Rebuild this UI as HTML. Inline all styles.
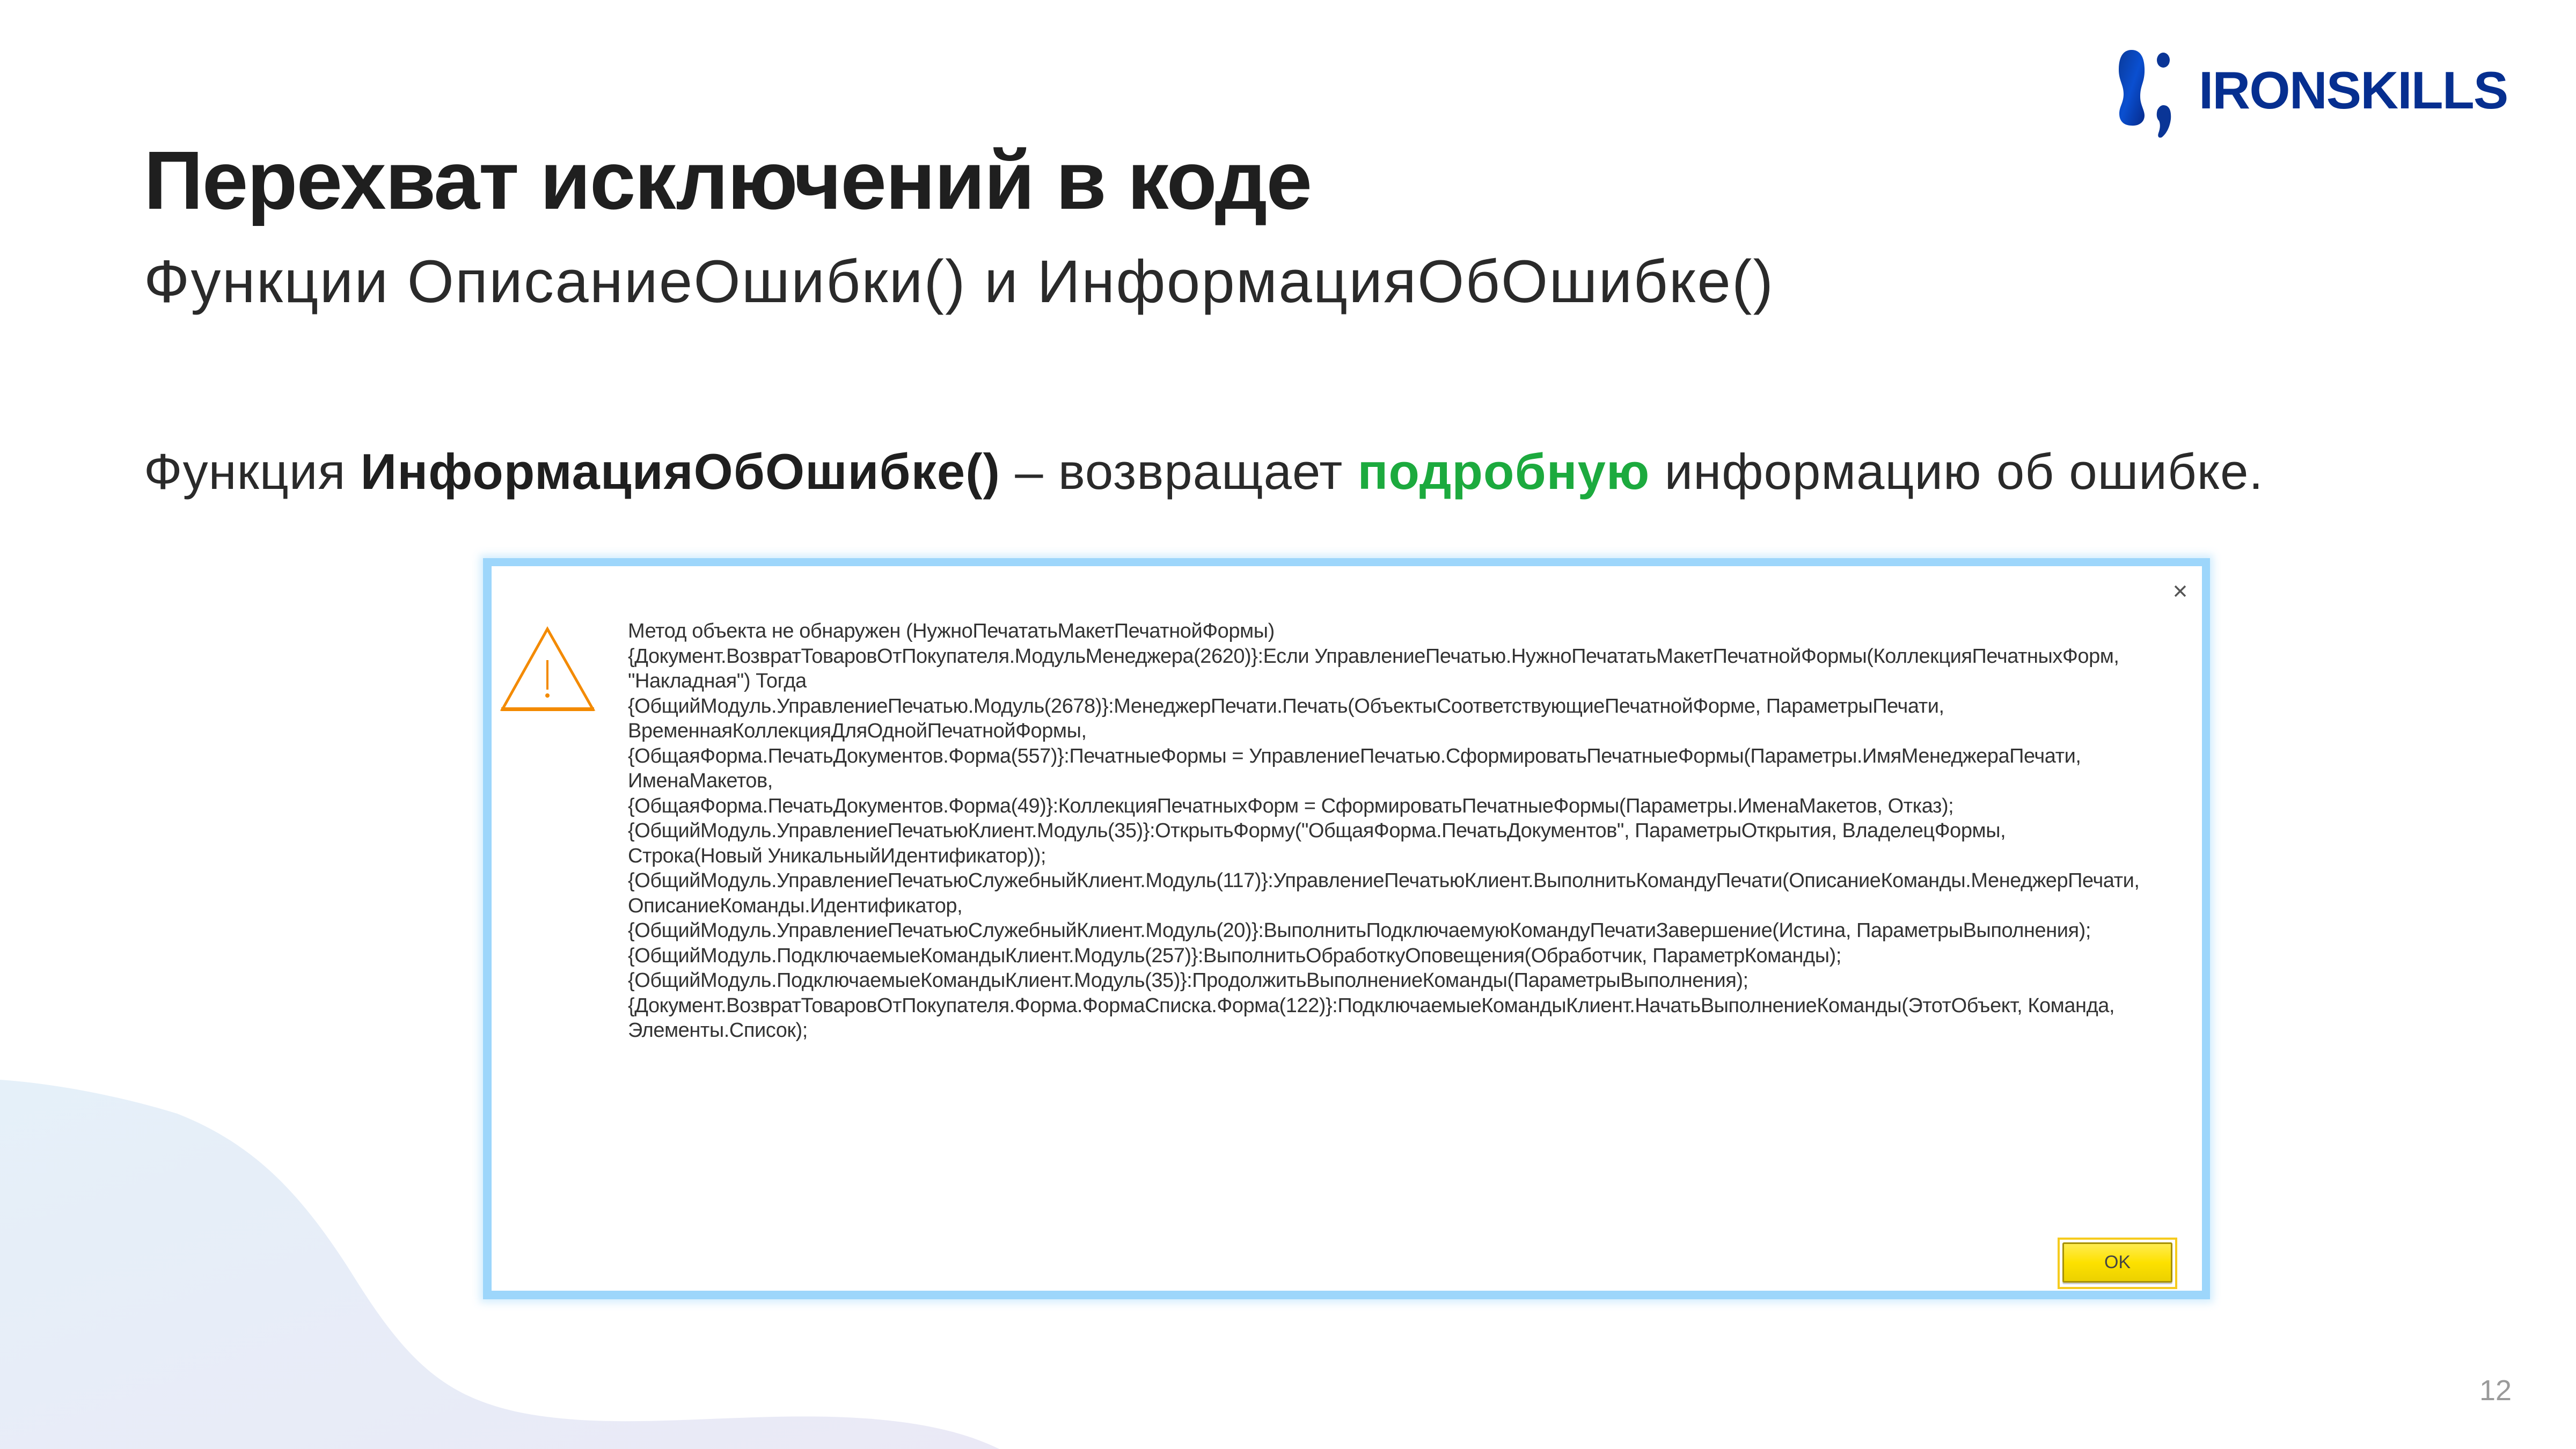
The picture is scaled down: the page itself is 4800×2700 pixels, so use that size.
<!DOCTYPE html>
<html><head><meta charset="utf-8">
<style>
*{margin:0;padding:0;box-sizing:border-box}
html,body{width:4800px;height:2700px;overflow:hidden;background:#fff}
body{position:relative;font-family:"Liberation Sans","DejaVu Sans",sans-serif;color:#222}
.abs{position:absolute}
#title{left:268px;top:248px;font-size:154px;font-weight:bold;letter-spacing:-2px;color:#1f1f1f;white-space:nowrap}
#sub{left:268px;top:460px;font-size:112px;color:#2a2a2a;white-space:nowrap;letter-spacing:2.3px}
#body{left:268px;top:825px;font-size:94px;color:#2a2a2a;white-space:nowrap;letter-spacing:1.1px}
#body b{color:#1f1f1f}
#body .g{color:#1caa3e;font-weight:bold}
#dlg{left:900px;top:1040px;width:3218px;height:1381px;background:#9dd6fb;box-shadow:0 0 14px 6px rgba(157,214,251,.45)}
#dlgin{left:916px;top:1055px;width:3187px;height:1350px;background:#fff}
#txt{left:1170px;top:1153px;font-size:38px;line-height:46.5px;color:#333;white-space:pre;letter-spacing:-0.45px}
#ok{left:3834px;top:2306px;width:223px;height:96px;border:4px solid #f6cb1e;background:#fff}
#okb{left:3843px;top:2315px;width:205px;height:75px;border:3px solid #a69000;border-radius:3px;background:linear-gradient(#ffec50,#fde100 50%,#ecd100);box-shadow:0 3px 0 #ccc;font-size:34px;color:#444;text-align:center;line-height:69px}
#logo{left:4097px;top:112px;font-size:98px;font-weight:bold;color:#062f90;letter-spacing:-1.8px;white-space:nowrap}
#pg{left:4620px;top:2560px;font-size:54px;color:#9a9a9a}
</style></head><body>
<svg class="abs" style="left:0;top:0" width="4800" height="2700">
<defs><linearGradient id="bg" x1="0" x2="1" y1="0" y2="1"><stop offset="0" stop-color="#e5f0f9"/><stop offset="1" stop-color="#eae9f6"/></linearGradient>
<linearGradient id="lg" x1="0" x2="1" y1="0" y2="1"><stop offset="0" stop-color="#0a3a9a"/><stop offset=".5" stop-color="#0a4fd0"/><stop offset="1" stop-color="#062a8a"/></linearGradient></defs>
<path d="M0 2012 C120 2020 250 2050 330 2075 C470 2130 560 2220 660 2380 C760 2540 830 2600 960 2630 C1100 2660 1250 2645 1440 2640 C1620 2636 1760 2650 1862 2700 L0 2700 Z" fill="url(#bg)"/>
<path d="M3972 93 C3990 93 3997 110 3996 135 C3995 155 3988 160 3988 180 C3988 195 3996 205 3996 215 C3996 228 3985 235 3972 234 C3958 234 3949 226 3949 212 C3949 198 3957 192 3957 175 C3957 158 3948 150 3948 130 C3948 108 3955 93 3972 93 Z" fill="url(#lg)"/>
<ellipse cx="4031" cy="112" rx="12" ry="14" fill="#0a3596"/>
<path d="M4031 196 C4044 196 4046 210 4045 222 C4043 238 4036 250 4028 256 C4022 258 4020 254 4022 248 C4025 240 4026 232 4023 225 C4018 220 4018 212 4020 205 C4023 199 4027 196 4031 196 Z" fill="#0a3596"/>
</svg>
<div id="logo" class="abs">IRONSKILLS</div>
<div id="title" class="abs">Перехват исключений в коде</div>
<div id="sub" class="abs">Функции ОписаниеОшибки() и ИнформацияОбОшибке()</div>
<div id="body" class="abs">Функция <b>ИнформацияОбОшибке()</b> – возвращает <span class="g">подробную</span> информацию об ошибке.</div>
<div id="dlg" class="abs"></div>
<div id="dlgin" class="abs"></div>
<svg class="abs" style="left:0;top:0" width="4800" height="2700">
<path d="M1020 1172 L936 1322 L1105 1322 Z" fill="none" stroke="#f38a00" stroke-width="5" stroke-linejoin="miter"/>
<rect x="934" y="1318" width="173" height="7" fill="#f38a00"/>
<rect x="1018" y="1230" width="4" height="55" fill="#f38a00"/>
<circle cx="1020" cy="1296" r="4" fill="#f38a00"/>
<path d="M4053 1092 L4072 1111 M4072 1092 L4053 1111" stroke="#555" stroke-width="3.5"/>
</svg>
<div id="txt" class="abs">Метод объекта не обнаружен (НужноПечататьМакетПечатнойФормы)
{Документ.ВозвратТоваровОтПокупателя.МодульМенеджера(2620)}:Если УправлениеПечатью.НужноПечататьМакетПечатнойФормы(КоллекцияПечатныхФорм,
"Накладная") Тогда
{ОбщийМодуль.УправлениеПечатью.Модуль(2678)}:МенеджерПечати.Печать(ОбъектыСоответствующиеПечатнойФорме, ПараметрыПечати,
ВременнаяКоллекцияДляОднойПечатнойФормы,
{ОбщаяФорма.ПечатьДокументов.Форма(557)}:ПечатныеФормы = УправлениеПечатью.СформироватьПечатныеФормы(Параметры.ИмяМенеджераПечати,
ИменаМакетов,
{ОбщаяФорма.ПечатьДокументов.Форма(49)}:КоллекцияПечатныхФорм = СформироватьПечатныеФормы(Параметры.ИменаМакетов, Отказ);
{ОбщийМодуль.УправлениеПечатьюКлиент.Модуль(35)}:ОткрытьФорму("ОбщаяФорма.ПечатьДокументов", ПараметрыОткрытия, ВладелецФормы,
Строка(Новый УникальныйИдентификатор));
{ОбщийМодуль.УправлениеПечатьюСлужебныйКлиент.Модуль(117)}:УправлениеПечатьюКлиент.ВыполнитьКомандуПечати(ОписаниеКоманды.МенеджерПечати,
ОписаниеКоманды.Идентификатор,
{ОбщийМодуль.УправлениеПечатьюСлужебныйКлиент.Модуль(20)}:ВыполнитьПодключаемуюКомандуПечатиЗавершение(Истина, ПараметрыВыполнения);
{ОбщийМодуль.ПодключаемыеКомандыКлиент.Модуль(257)}:ВыполнитьОбработкуОповещения(Обработчик, ПараметрКоманды);
{ОбщийМодуль.ПодключаемыеКомандыКлиент.Модуль(35)}:ПродолжитьВыполнениеКоманды(ПараметрыВыполнения);
{Документ.ВозвратТоваровОтПокупателя.Форма.ФормаСписка.Форма(122)}:ПодключаемыеКомандыКлиент.НачатьВыполнениеКоманды(ЭтотОбъект, Команда,
Элементы.Список);</div>
<div id="ok" class="abs"></div>
<div id="okb" class="abs">OK</div>
<div id="pg" class="abs">12</div>
</body></html>
